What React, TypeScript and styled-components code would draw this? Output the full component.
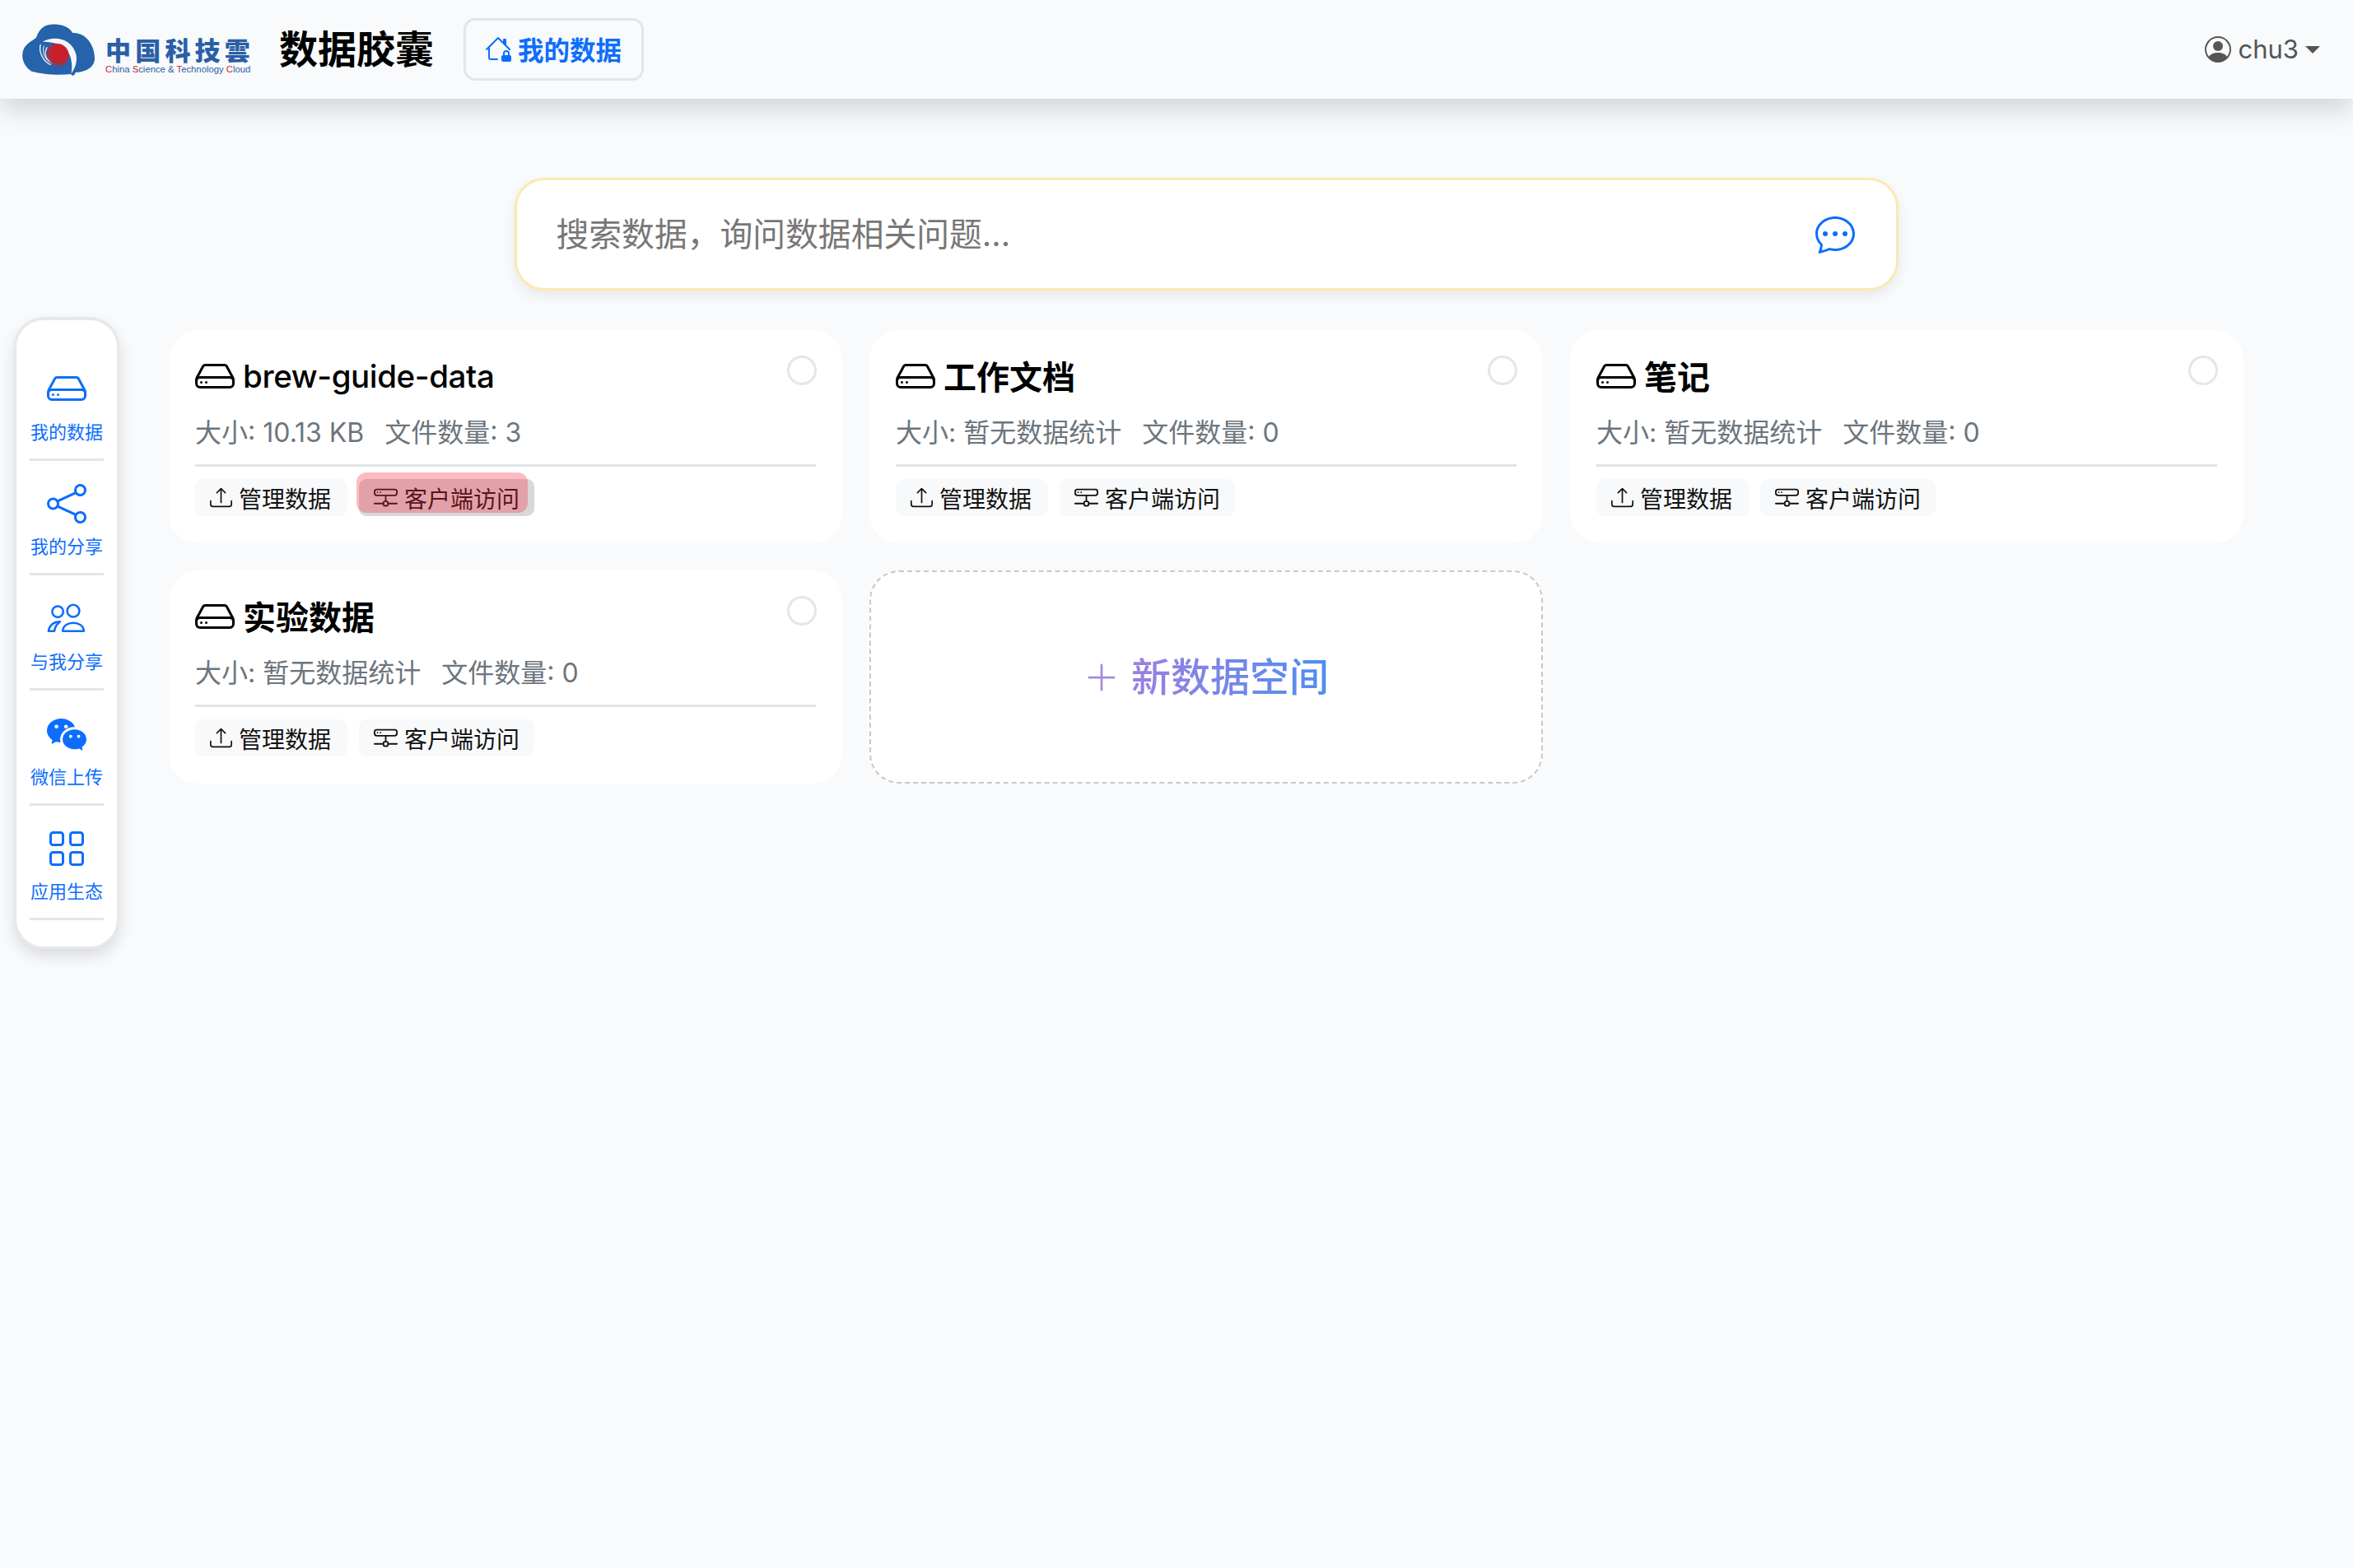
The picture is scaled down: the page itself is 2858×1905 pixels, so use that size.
import React from 'react';
import styled, { createGlobalStyle } from 'styled-components';
import {
  BsChatDots,
  BsGrid,
  BsHdd,
  BsHddNetwork,
  BsHouseLock,
  BsPersonCircle,
  BsPlusLg,
  BsShare,
  BsUpload,
  BsWechat,
} from 'react-icons/bs';

const FONT = `Inter, "Noto Sans CJK SC", "Noto Sans", sans-serif`;

const GlobalStyle = createGlobalStyle`
  html, body {
    margin: 0;
    padding: 0;
    background: #f8fafc;
    font-family: ${FONT};
  }
  * {
    box-sizing: border-box;
  }
`;

const Page = styled.div`
  min-height: 100vh;
  overflow: hidden;
`;

const Navbar = styled.header`
  height: 120px;
  padding: 0 40px 0 20px;
  display: flex;
  align-items: center;
  background: #f8fafc;
  box-shadow: 0 14px 29px rgba(0, 0, 0, 0.15);
`;

const Brand = styled.div`
  display: flex;
  align-items: center;
  gap: 8px;
  width: 319px;
`;

const BrandText = styled.div`
  display: flex;
  flex-direction: column;
  width: 180px;
  margin-top: 12px;
`;

const BrandName = styled.span`
  font-family: "Noto Sans CJK SC", sans-serif;
  font-size: 31px;
  line-height: 36px;
  font-weight: 900;
  letter-spacing: 5.2px;
  color: #2b5fa6;
  white-space: nowrap;
`;

const BrandSub = styled.span`
  font-family: "Liberation Sans", sans-serif;
  font-size: 11.3px;
  line-height: 13px;
  color: #2b5fa6;
  white-space: nowrap;

  b {
    font-weight: 400;
    color: #c8232c;
  }
`;

const Title = styled.h1`
  margin: 0 33px 0 0;
  width: 191px;
  font-size: 47px;
  line-height: 60px;
  font-weight: 700;
  color: #000;
  white-space: nowrap;
`;

const HomeButton = styled.button`
  width: 219px;
  height: 76px;
  padding: 0 0 2px 23px;
  display: flex;
  align-items: center;
  gap: 8px;
  background: transparent;
  border: 3px solid #e2e5e9;
  border-radius: 14px;
  color: #0d6efd;
  font-family: ${FONT};
  font-size: 31.5px;
  font-weight: 700;
  white-space: nowrap;
`;

const UserMenu = styled.div`
  margin-left: auto;
  display: flex;
  align-items: center;
  gap: 8px;
  color: #555;
  font-size: 31px;
  line-height: 40px;
`;

const Caret = styled.span`
  width: 0;
  height: 0;
  border-top: 9px solid #555;
  border-left: 9px solid transparent;
  border-right: 9px solid transparent;
`;

const Body = styled.div`
  display: flex;
  align-items: flex-start;
`;

const Sidebar = styled.aside`
  flex: none;
  width: 128px;
  height: 768px;
  margin: 265px 60px 0 17px;
  padding: 31px 16px 0;
  background: #fff;
  border: 3px solid #e6e8eb;
  border-top-width: 4px;
  border-radius: 36px;
  box-shadow: 0 9px 18px rgba(0, 0, 0, 0.12);
`;

const SideItem = styled.div`
  height: 139.7px;
  padding-top: 28px;
  display: flex;
  flex-direction: column;
  align-items: center;
  border-bottom: 3px solid #e3e5e8;
  color: #0d6efd;
`;

const SideIcon = styled.div`
  height: 48px;
  display: flex;
  align-items: center;
  justify-content: center;
`;

const SideLabel = styled.span`
  margin-top: 13.5px;
  font-size: 22px;
  line-height: 30px;
  white-space: nowrap;
`;

const Content = styled.main`
  flex: none;
  width: 2520px;
  padding-top: 96px;
`;

const SearchBox = styled.div`
  width: 1681px;
  height: 137px;
  margin: 0 auto 48px;
  padding: 0 50px 2px 48px;
  display: flex;
  align-items: center;
  background: #fff;
  border: 3px solid #fce9b0;
  border-radius: 36px;
  box-shadow: 0 7px 16px rgba(0, 0, 0, 0.07);
  color: #0d6efd;
`;

const SearchInput = styled.input`
  flex: 1;
  min-width: 0;
  margin-top: 2px;
  border: none;
  outline: none;
  padding: 0;
  background: transparent;
  font-family: ${FONT};
  font-size: 39.8px;

  &::placeholder {
    color: #777;
    opacity: 1;
  }
`;

const CardGrid = styled.div`
  display: grid;
  grid-template-columns: repeat(3, 818px);
  grid-auto-rows: 259px;
  gap: 33px;
`;

const Card = styled.section`
  position: relative;
  padding: 26px 32px 0;
  background: #fff;
  border-radius: 36px;
`;

const CardTitle = styled.div`
  height: 60px;
  display: flex;
  align-items: center;
  gap: 10px;
  color: #000;
`;

const CardName = styled.span<{ $latin?: boolean }>`
  font-size: ${(p) => (p.$latin ? '38.5px' : '40px')};
  font-weight: ${(p) => (p.$latin ? 500 : 600)};
  letter-spacing: ${(p) => (p.$latin ? '-0.4px' : '0')};
  margin-bottom: ${(p) => (p.$latin ? '0' : '3px')};
`;

const SelectCircle = styled.span`
  position: absolute;
  top: 31px;
  right: 31px;
  width: 36px;
  height: 36px;
  border: 3px solid #e6e6e6;
  border-radius: 50%;
`;

const CardMeta = styled.div`
  height: 44px;
  margin-top: 17px;
  display: flex;
  gap: 25px;
  font-size: 32px;
  line-height: 44px;
  color: #6c757d;
  white-space: nowrap;
`;

const CardDivider = styled.hr`
  height: 3px;
  margin: 16px 0 15px;
  border: none;
  background: #e2e3e5;
`;

const CardActions = styled.div`
  display: flex;
  gap: 14px;
`;

const ActionButton = styled.button<{ $hovered?: boolean }>`
  position: relative;
  height: 45px;
  padding: 0 18px 0 18px;
  display: flex;
  align-items: center;
  gap: 8px;
  border: none;
  border-radius: 9px;
  background: ${(p) => (p.$hovered ? '#d8d8d8' : '#f8f9fa')};
  color: #111;
  font-family: ${FONT};
  font-size: 28px;
  white-space: nowrap;

  &:first-child {
    padding-right: 20px;
  }
`;

const HoverMark = styled.span`
  position: absolute;
  left: -3px;
  top: -8px;
  right: 8px;
  bottom: 4px;
  border-radius: 12px;
  background: rgba(248, 32, 55, 0.3);
`;

const NewCard = styled.section`
  display: flex;
  align-items: center;
  justify-content: center;
  gap: 14px;
  background: #fff;
  border: 2px dashed #c8c8c8;
  border-radius: 36px;
  color: #a58ae2;
`;

const NewCardText = styled.span`
  font-size: 48px;
  line-height: 60px;
  font-weight: 500;
  background: linear-gradient(90deg, #9a80e0, #4f8eef);
  -webkit-background-clip: text;
  background-clip: text;
  color: transparent;
`;

const CloudLogo = () => (
  <svg width="100" height="72" viewBox="0 0 300 216" style={{ flex: 'none' }}>
    <path
      d="M110 20 C150 10 190 22 205 48 C250 45 285 90 285 140 C285 175 250 190 215 192 C212 203 205 208 198 198 C150 204 95 198 55 188 C25 170 12 130 30 100 C45 80 60 75 72 65 C80 40 95 25 110 20 Z"
      fill="#2563ab"
    />
    <path
      d="M95 80 C140 55 205 70 218 130 C222 155 212 180 200 196 C206 160 200 115 165 95 C140 82 115 80 95 80 Z"
      fill="#f4f7fb"
    />
    <path d="M88 90 C80 115 95 150 125 165" fill="none" stroke="#f4f7fb" strokeWidth="4" />
    <path d="M100 95 C92 120 105 150 130 160" fill="none" stroke="#f4f7fb" strokeWidth="3" />
    <path d="M112 100 C100 120 105 140 122 152" fill="none" stroke="#f4f7fb" strokeWidth="4" />
    <defs>
      <radialGradient id="sun" cx="0.6" cy="0.42" r="0.6">
        <stop offset="0.6" stopColor="#c8202a" />
        <stop offset="1" stopColor="#c8202a" stopOpacity="0" />
      </radialGradient>
    </defs>
    <circle cx="147" cy="130" r="44" fill="url(#sun)" />
  </svg>
);

const PeopleIcon = () => (
  <svg width="48" height="38" viewBox="50 35 150 115" fill="none" stroke="currentColor" strokeWidth="8">
    <circle cx="150" cy="65" r="23" />
    <circle cx="91" cy="68" r="21" />
    <path d="M110 142 C110 100 190 100 190 142 Z" strokeLinejoin="round" />
    <path d="M56 142 C58 118 78 106 100 106 C86 116 80 128 78 142 Z" strokeLinejoin="round" />
  </svg>
);

const sideItems = [
  { label: '我的数据', icon: <BsHdd size={48} /> },
  { label: '我的分享', icon: <BsShare size={48} /> },
  { label: '与我分享', icon: <PeopleIcon /> },
  { label: '微信上传', icon: <BsWechat size={48} /> },
  { label: '应用生态', icon: <BsGrid size={48} /> },
];

const spaces = [
  { name: 'brew-guide-data', latin: true, size: '10.13 KB', files: 3, hovered: true },
  { name: '工作文档', size: '暂无数据统计', files: 0 },
  { name: '笔记', size: '暂无数据统计', files: 0 },
  { name: '实验数据', size: '暂无数据统计', files: 0 },
];

export default function App() {
  return (
    <Page>
      <GlobalStyle />
      <Navbar>
        <Brand>
          <CloudLogo />
          <BrandText>
            <BrandName>中国科技雲</BrandName>
            <BrandSub>
              <b>C</b>hina <b>S</b>cience &amp; <b>T</b>echnology <b>C</b>loud
            </BrandSub>
          </BrandText>
        </Brand>
        <Title>数据胶囊</Title>
        <HomeButton>
          <BsHouseLock size={32} />
          我的数据
        </HomeButton>
        <UserMenu>
          <BsPersonCircle size={32} />
          chu3
          <Caret />
        </UserMenu>
      </Navbar>
      <Body>
        <Sidebar>
          {sideItems.map((item) => (
            <SideItem key={item.label}>
              <SideIcon>{item.icon}</SideIcon>
              <SideLabel>{item.label}</SideLabel>
            </SideItem>
          ))}
        </Sidebar>
        <Content>
          <SearchBox>
            <SearchInput placeholder="搜索数据，询问数据相关问题..." />
            <BsChatDots size={48} />
          </SearchBox>
          <CardGrid>
            {spaces.map((space) => (
              <Card key={space.name}>
                <SelectCircle />
                <CardTitle>
                  <BsHdd size={48} />
                  <CardName $latin={space.latin}>{space.name}</CardName>
                </CardTitle>
                <CardMeta>
                  <span>大小: {space.size}</span>
                  <span>文件数量: {space.files}</span>
                </CardMeta>
                <CardDivider />
                <CardActions>
                  <ActionButton>
                    <BsUpload size={27} />
                    管理数据
                  </ActionButton>
                  <ActionButton $hovered={space.hovered}>
                    <BsHddNetwork size={29} />
                    客户端访问
                    {space.hovered && <HoverMark />}
                  </ActionButton>
                </CardActions>
              </Card>
            ))}
            <NewCard>
              <BsPlusLg size={44} />
              <NewCardText>新数据空间</NewCardText>
            </NewCard>
          </CardGrid>
        </Content>
      </Body>
    </Page>
  );
}
